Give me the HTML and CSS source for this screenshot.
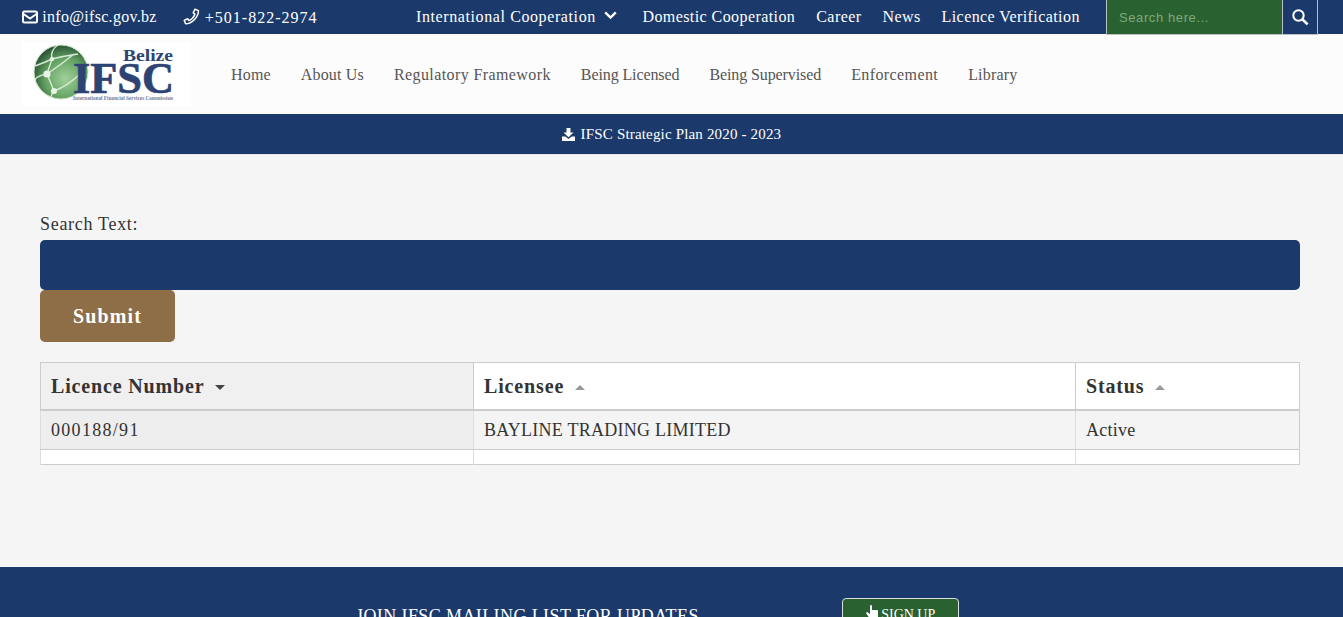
FILE: index.html
```html
<!DOCTYPE html>
<html lang="en">
<head>
  <meta charset="UTF-8" />
  <title>IFSC Licence Verification</title>
  <meta name="viewport" content="width=device-width, initial-scale=1.0" />
  <link rel="stylesheet" href="styles.css">
</head>
<body>
  <div class="topbar">
    <div class="contact">
      <a class="contact-item" href="#">
        <svg class="icon" width="16" height="14" viewBox="0 0 16 14"><rect x="1" y="1.5" width="14" height="11" rx="1.5" fill="none" stroke="#fff" stroke-width="2"/><path d="M1.5 4 L8 8.6 L14.5 4" fill="none" stroke="#fff" stroke-width="2"/></svg>
        info@ifsc.gov.bz
      </a>
      <a class="contact-item phone" href="#">
        <svg class="icon" width="17" height="17" viewBox="0 0 17 17"><path d="M12 1.2 L15.4 2.6 C15.8 8.5 9 15.8 2.6 15.8 L1.2 12.4 L4.6 10.8 L6 12.6 C8.6 11.4 11 8.8 12 6.2 L10.2 4.8 Z" fill="none" stroke="#fff" stroke-width="1.5" stroke-linejoin="round"/></svg>
        +501-822-2974
      </a>
    </div>
    <nav class="toplinks">
      <a class="has-menu" href="#">International Cooperation
        <svg class="chevron" width="13" height="9" viewBox="0 0 13 9"><path d="M1.2 1.4 L6.5 6.6 L11.8 1.4" fill="none" stroke="#fff" stroke-width="2.4"/></svg>
      </a>
      <a href="#">Domestic Cooperation</a>
      <a href="#">Career</a>
      <a href="#">News</a>
      <a href="#">Licence Verification</a>
    </nav>
    <form class="topsearch">
      <input type="text" placeholder="Search here..." />
      <button type="button" aria-label="Search">
        <svg width="18" height="18" viewBox="0 0 18 18"><circle cx="7.5" cy="7.5" r="5.2" fill="none" stroke="#fff" stroke-width="2"/><path d="M11.3 11.3 L16.6 16.4" stroke="#fff" stroke-width="2.6"/></svg>
      </button>
    </form>
  </div>

  <header class="mainnav">
    <a class="logo" href="#">
      <svg width="168" height="64" viewBox="0 0 168 64">
        <defs>
          <radialGradient id="globe" cx="58%" cy="62%" r="62%">
            <stop offset="0" stop-color="#a2d09a"/>
            <stop offset="0.6" stop-color="#64a263"/>
            <stop offset="1" stop-color="#2c5638"/>
          </radialGradient>
        </defs>
        <rect width="168" height="64" fill="#fff"/>
        <circle cx="39" cy="30" r="27" fill="url(#globe)" stroke="#cfe6c8" stroke-width="1"/>
        <path d="M13 24 Q24 20 30 17 Q42 14 56 12 M30 17 Q28 8 36 3 M30 17 L25 32 L32 49 M25 32 Q14 34 13 38 M25 32 Q40 22 52 12 M32 49 Q46 44 60 30 M32 49 Q28 54 30 56" fill="none" stroke="#d8ead3" stroke-width="1.4"/>
        <circle cx="25" cy="32" r="3.6" fill="#eaf4e6"/>
        <circle cx="32" cy="49" r="3" fill="#eaf4e6"/>
        <circle cx="30" cy="17" r="2.2" fill="#eaf4e6"/>
        <text class="logo-belize" x="101" y="19" textLength="50" lengthAdjust="spacingAndGlyphs">Belize</text>
        <text class="logo-ifsc" x="51" y="51" textLength="101" lengthAdjust="spacingAndGlyphs">IFSC</text>
        <text class="logo-sub" x="51" y="58" textLength="100" lengthAdjust="spacingAndGlyphs">International Financial Services Commission</text>
      </svg>
    </a>
    <nav class="menu">
      <a href="#">Home</a>
      <a href="#">About Us</a>
      <a class="wide" href="#">Regulatory Framework</a>
      <a class="tight" href="#">Being Licensed</a>
      <a class="tight" href="#">Being Supervised</a>
      <a class="wide" href="#">Enforcement</a>
      <a href="#">Library</a>
    </nav>
  </header>

  <div class="notice">
    <a href="#">
      <svg class="icon" width="13" height="13" viewBox="0 0 13 13"><path d="M4.5 0 H8.5 V4.5 H11.5 L6.5 9.2 L1.5 4.5 H4.5 Z" fill="#fff"/><path d="M0 8.6 H3.4 L6.5 11 L9.6 8.6 H13 V13 H0 Z" fill="#fff"/></svg>
      IFSC Strategic Plan 2020 - 2023
    </a>
  </div>

  <main class="content">
    <form class="search-form">
      <label for="searchText">Search Text:</label>
      <input type="text" id="searchText" />
      <button type="button">Submit</button>
    </form>

    <table class="licences">
      <thead>
        <tr>
          <th class="col-number sorted">Licence Number <span class="caret down"></span></th>
          <th class="col-name">Licensee <span class="caret"></span></th>
          <th class="col-status">Status <span class="caret"></span></th>
        </tr>
      </thead>
      <tbody>
        <tr>
          <td class="sorted num">000188/91</td>
          <td>BAYLINE TRADING LIMITED</td>
          <td>Active</td>
        </tr>
      </tbody>
      <tfoot>
        <tr><td></td><td></td><td></td></tr>
      </tfoot>
    </table>
  </main>

  <footer class="footer">
    <p class="join">JOIN IFSC MAILING LIST FOR UPDATES</p>
    <a class="signup" href="#">
      <svg width="12" height="14" viewBox="0 0 12 14"><path d="M4 1 Q4 0 5 0 Q6 0 6 1 V5 H11 Q12 5 12 6 V12 L11 14 H4 L0 8 L1 7 L4 9 Z" fill="#fff"/></svg>
      SIGN UP
    </a>
  </footer>
</body>
</html>
```

FILE: styles.css
```css
html, body {
  height: 100%;
  overflow: hidden;
}
body {
  margin: 0;
  font-family: "Liberation Serif", serif;
  background: #f5f5f5;
  color: #333;
}
a {
  color: inherit;
  text-decoration: none;
}
.icon {
  vertical-align: -2px;
}

/* top bar */
.topbar {
  display: flex;
  align-items: center;
  height: 34px;
  padding-left: 22px;
  background: #1b3a6b;
  color: #fff;
  font-size: 16px;
}
.contact {
  display: flex;
  gap: 26px;
  width: 394px;
}
.contact-item {
  letter-spacing: 0.3px;
}
.contact-item.phone {
  letter-spacing: 1px;
}
.toplinks {
  display: flex;
  gap: 21px;
  width: 690px;
  letter-spacing: 0.42px;
}
.has-menu {
  letter-spacing: 0.6px;
}
.chevron {
  margin: 0 4px 0 4px;
  vertical-align: 2px;
}
.topsearch {
  display: flex;
  height: 35px;
  align-self: flex-start;
}
.topsearch input {
  width: 177px;
  height: 35px;
  box-sizing: border-box;
  padding: 0 12px;
  background: #2a6130;
  border: 1px solid #b9bfc4;
  border-width: 0 1px 1px 1px;
  color: #fff;
  font-family: "Liberation Sans", sans-serif;
  font-size: 13px;
  letter-spacing: 0.6px;
}
.topsearch input::placeholder {
  color: #7fa97f;
  opacity: 1;
}
.topsearch button {
  width: 35px;
  height: 35px;
  padding: 0;
  background: #1b3a6b;
  border: 1px solid #b9bfc4;
  border-width: 0 1px 1px 0;
}
.topsearch svg {
  display: block;
  margin: auto;
}

/* main nav */
.mainnav {
  display: flex;
  align-items: center;
  height: 80px;
  padding-left: 22px;
  background: #fcfcfc;
}
.logo {
  display: block;
  width: 168px;
  height: 64px;
}
.logo svg {
  display: block;
}
.logo-belize {
  font: bold 17px "Liberation Serif", serif;
  fill: #2d4373;
}
.logo-ifsc {
  font: bold 44px "Liberation Serif", serif;
  fill: #2d4373;
  stroke: #2d4373;
  stroke-width: 0.7px;
}
.logo-sub {
  font: bold 6px "Liberation Serif", serif;
  fill: #6d7b9b;
}
.menu {
  display: flex;
  gap: 30px;
  margin-left: 41px;
  padding-top: 2px;
  color: #555;
  font-size: 16px;
  letter-spacing: 0.17px;
}
.menu .wide {
  letter-spacing: 0.4px;
}
.menu .tight {
  letter-spacing: -0.1px;
}

/* notice band */
.notice {
  height: 40px;
  line-height: 41px;
  text-align: center;
  background: #1b3a6b;
  color: #fff;
  font-size: 15px;
  letter-spacing: 0.17px;
  border-bottom: 1px solid #e6e6e6;
}
.notice .icon {
  margin-right: 2px;
}

/* form and table */
.content {
  height: 412px;
  padding: 58px 43px 0 40px;
  box-sizing: border-box;
}
.search-form label {
  display: block;
  height: 27px;
  line-height: 22px;
  font-size: 18px;
  letter-spacing: 0.7px;
}
.search-form input {
  display: block;
  width: 100%;
  height: 50px;
  box-sizing: border-box;
  border: none;
  border-radius: 5px;
  background: #1b3a6b;
}
.search-form button {
  display: block;
  width: 135px;
  height: 52px;
  border: none;
  border-radius: 5px;
  background: #8d6e47;
  color: #fff;
  font-family: inherit;
  font-size: 20px;
  font-weight: bold;
  letter-spacing: 1.1px;
}
.licences {
  width: 100%;
  margin-top: 20px;
  border-collapse: collapse;
  table-layout: fixed;
  background: #fff;
  border: 1px solid #ccc;
}
.licences th,
.licences td {
  padding: 0 10px;
  text-align: left;
  border-left: 1px solid #ddd;
}
.licences th {
  height: 46px;
  font-size: 20px;
  letter-spacing: 0.85px;
  border-bottom: 2px solid #ccc;
  border-left-color: #ccc;
}
.licences tbody td {
  height: 38px;
  font-size: 18px;
  letter-spacing: 0.25px;
  background: #f4f4f4;
  border-bottom: 1px solid #ccc;
}
.licences tbody td.num {
  letter-spacing: 1.3px;
}
.licences tfoot td {
  height: 14px;
  padding: 0;
}
.licences th.sorted {
  background: #f0f0f0;
}
.licences td.sorted {
  background: #eee;
}
.col-number {
  width: 412px;
}
.col-status {
  width: 203px;
}
.caret {
  display: inline-block;
  margin-left: 5px;
  border-left: 5px solid transparent;
  border-right: 5px solid transparent;
  border-bottom: 5px solid #999;
  vertical-align: 3px;
}
.caret.down {
  border-bottom: none;
  border-top: 5px solid #444;
}

/* footer */
.footer {
  display: flex;
  align-items: flex-start;
  height: 120px;
  padding: 31px 0 0 356px;
  background: #1b3a6b;
  color: #fff;
}
.join {
  width: 486px;
  margin: 8px 0 0;
  font-size: 18px;
  letter-spacing: 0.4px;
}
.signup {
  display: block;
  width: 117px;
  height: 36px;
  line-height: 31px;
  box-sizing: border-box;
  text-align: center;
  background: #2a6130;
  border: 1px solid #ddd;
  border-radius: 4px;
  font-size: 14px;
}
```
